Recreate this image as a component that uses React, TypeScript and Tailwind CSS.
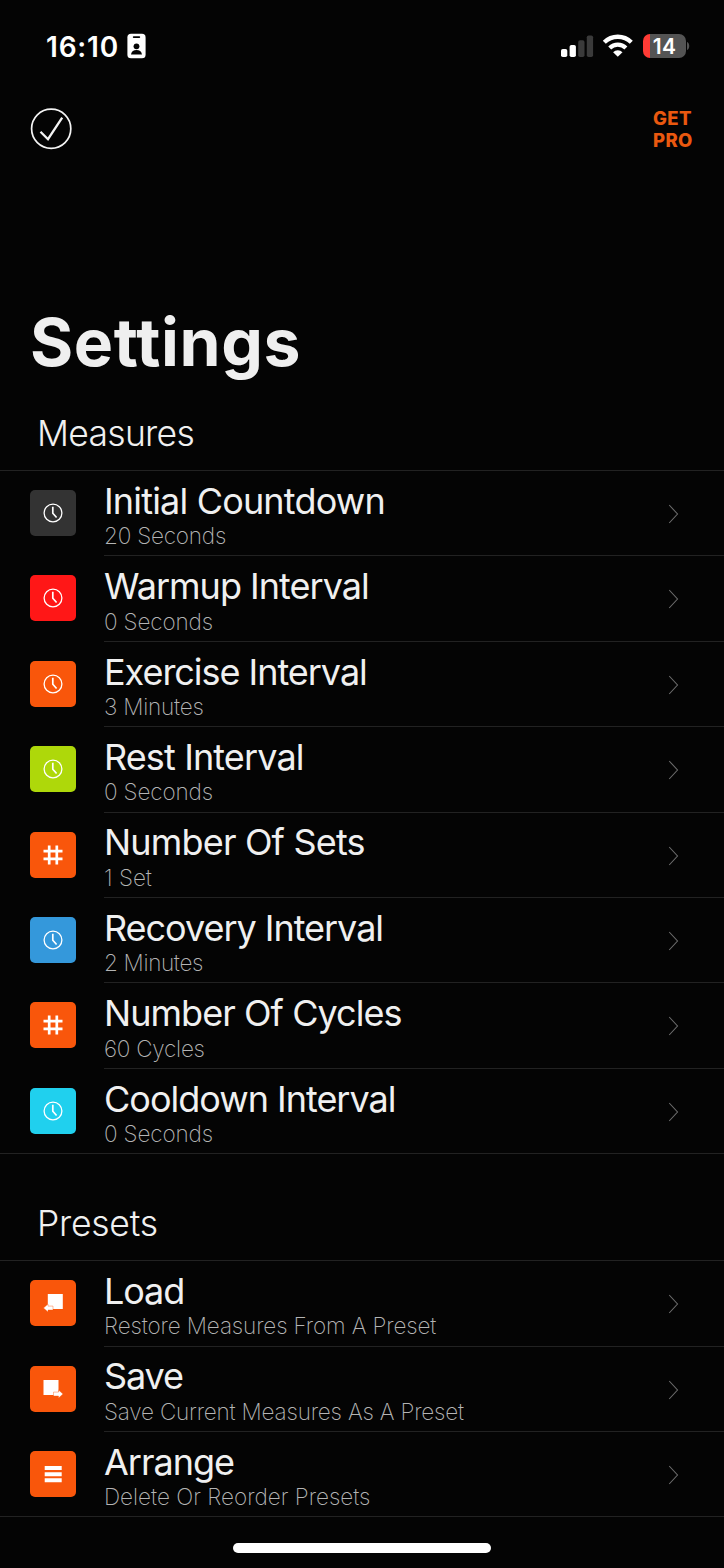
import React from "react";

type IconKind = "clock" | "hash" | "load" | "save" | "arrange";

interface Item {
  title: string;
  detail: string;
  icon: IconKind;
  color: string;
  titleTracking: string;
  detailTracking: string;
}

const measures: Item[] = [
  { title: "Initial Countdown", detail: "20 Seconds", icon: "clock", color: "bg-[#333333]", titleTracking: "tracking-[-0.82px]", detailTracking: "tracking-[-0.2px]" },
  { title: "Warmup Interval", detail: "0 Seconds", icon: "clock", color: "bg-[#ff1717]", titleTracking: "tracking-[-0.98px]", detailTracking: "tracking-[-0.15px]" },
  { title: "Exercise Interval", detail: "3 Minutes", icon: "clock", color: "bg-[#f9560b]", titleTracking: "tracking-[-1.03px]", detailTracking: "tracking-[-0.22px]" },
  { title: "Rest Interval", detail: "0 Seconds", icon: "clock", color: "bg-[#aed80a]", titleTracking: "tracking-[-0.88px]", detailTracking: "tracking-[-0.15px]" },
  { title: "Number Of Sets", detail: "1 Set", icon: "hash", color: "bg-[#f9560b]", titleTracking: "tracking-[-0.82px]", detailTracking: "tracking-[0px]" },
  { title: "Recovery Interval", detail: "2 Minutes", icon: "clock", color: "bg-[#3498db]", titleTracking: "tracking-[-1.03px]", detailTracking: "tracking-[-0.33px]" },
  { title: "Number Of Cycles", detail: "60 Cycles", icon: "hash", color: "bg-[#f9560b]", titleTracking: "tracking-[-0.95px]", detailTracking: "tracking-[-0.25px]" },
  { title: "Cooldown Interval", detail: "0 Seconds", icon: "clock", color: "bg-[#20d0ee]", titleTracking: "tracking-[-1px]", detailTracking: "tracking-[-0.15px]" },
];

const presets: Item[] = [
  { title: "Load", detail: "Restore Measures From A Preset", icon: "load", color: "bg-[#f9560b]", titleTracking: "tracking-[-1.1px]", detailTracking: "tracking-[-0.13px]" },
  { title: "Save", detail: "Save Current Measures As A Preset", icon: "save", color: "bg-[#f9560b]", titleTracking: "tracking-[-1.1px]", detailTracking: "tracking-[-0.19px]" },
  { title: "Arrange", detail: "Delete Or Reorder Presets", icon: "arrange", color: "bg-[#f9560b]", titleTracking: "tracking-[-1px]", detailTracking: "tracking-[0px]" },
];

function RowIcon({ kind }: { kind: IconKind }) {
  return (
    <svg width="46" height="46" viewBox="0 0 46 46" fill="none">
      {kind === "clock" && (
        <g stroke="#fff">
          <circle cx="23" cy="23" r="8.9" strokeWidth="1.3" />
          <path d="M22.8 16.8v6.4l3.8 4.3" strokeWidth="1.7" />
        </g>
      )}
      {kind === "hash" && (
        <path d="M19.2 13.5v19M26.8 13.5v19M13.5 19.2h19M13.5 26.8h19" stroke="#fff" strokeWidth="2.7" />
      )}
      {kind === "load" && (
        <g fill="#fff">
          <path d="M17.8 14h15v15h-15z" />
          <path d="M13.5 28l4.5-4v2.1h5v3.9h-5v2z" stroke="#f9560b" strokeWidth=".4" />
        </g>
      )}
      {kind === "save" && (
        <g fill="#fff">
          <path d="M13.5 14h15v15h-15z" />
          <path d="M33 28l-4.5-4v2.1h-5v3.9h5v2z" stroke="#f9560b" strokeWidth=".4" />
        </g>
      )}
      {kind === "arrange" && <path d="M14.7 15h17v4h-17zM14.7 21.2h17v4h-17zM14.7 27.3h17v4h-17z" fill="#fff" />}
    </svg>
  );
}

function Row({ item, last }: { item: Item; last: boolean }) {
  return (
    <li className={last ? "flex h-[85.4px] border-b border-[#222222] pl-[30px]" : "flex h-[85.4px] pl-[30px]"}>
      <div className={`mt-[19px] size-[46px] shrink-0 overflow-hidden rounded-[5px] ${item.color}`}>
        <RowIcon kind={item.icon} />
      </div>
      <div className={last ? "ml-7 flex flex-1 justify-between" : "ml-7 flex flex-1 justify-between border-b border-[#222222]"}>
        <div className="pt-[11.8px] whitespace-nowrap">
          <div className={`text-[36px] leading-9 text-[#f0f0f0] ${item.titleTracking}`}>{item.title}</div>
          <div className={`mt-[5.5px] text-[22.5px] leading-6 font-extralight text-[#b4b4b4] ${item.detailTracking}`}>{item.detail}</div>
        </div>
        <svg className="mt-[33px] mr-[44px]" width="12" height="20" viewBox="0 0 12 20" fill="none">
          <path d="M1.2 1l8.3 9-8.3 9" stroke="#6c6c6c" strokeWidth="1.1" />
        </svg>
      </div>
    </li>
  );
}

function List({ items }: { items: Item[] }) {
  return (
    <ul className="border-t border-[#222222]">
      {items.map((item, i) => (
        <Row key={item.title} item={item} last={i === items.length - 1} />
      ))}
    </ul>
  );
}

export default function App() {
  return (
    <div className="flex h-[1568px] w-[724px] flex-col overflow-hidden bg-[#040404] font-['Inter',sans-serif] text-white">
      <header className="flex h-[92px] items-center justify-between pr-[34px] pl-[46px]">
        <div className="flex items-center gap-[8px]">
          <span className="pt-[2px] text-[28px] leading-8 font-semibold tracking-[0.8px]">16:10</span>
          <svg width="19" height="26" viewBox="0 0 19 26">
            <rect x=".4" y=".8" width="18.2" height="24.5" rx="3.6" fill="#fff" />
            <g fill="#040404">
              <rect x="5.8" y="3.2" width="7.4" height="1.8" rx=".9" />
              <circle cx="9.5" cy="13.3" r="2.9" />
              <path d="M4 21.5c.4-3 2.6-4.4 5.5-4.4s5.1 1.4 5.5 4.4z" />
            </g>
          </svg>
        </div>
        <div className="flex items-center">
          <svg width="33" height="24" viewBox="0 0 33 24">
            <g fill="#fff">
              <rect x="0" y="15" width="6.3" height="8" rx="1.8" />
              <rect x="8.6" y="11" width="6.3" height="12" rx="1.8" />
            </g>
            <g fill="#3a3a3a">
              <rect x="17.2" y="6.3" width="6.3" height="16.7" rx="1.8" />
              <rect x="25.8" y="1.5" width="6.3" height="21.5" rx="1.8" />
            </g>
          </svg>
          <svg className="ml-[8px]" width="32" height="24" viewBox="0 0 32 24" fill="none">
            <path d="M2.3 8.3a19.2 19.2 0 0 1 27 0" stroke="#fff" strokeWidth="4.3" />
            <path d="M7.7 13.9a11.6 11.6 0 0 1 16.2 0" stroke="#fff" strokeWidth="4.2" />
            <path d="M15.8 22.7l-4.7-4.5a6.7 6.7 0 0 1 9.4 0z" fill="#fff" />
          </svg>
          <div className="ml-[9px] flex h-6 w-[43px] items-center justify-center rounded-[7px] bg-[linear-gradient(90deg,#ff3b35_7px,#545454_7px)]">
            <span className="pt-px text-[21px] leading-6 font-semibold tracking-[0.3px]">14</span>
          </div>
          <svg className="ml-px" width="3" height="8" viewBox="0 0 3 8">
            <path d="M0 0c3 1 3 7 0 8z" fill="#545454" />
          </svg>
        </div>
      </header>

      <nav className="flex h-[74px] items-center justify-between pr-[31px] pl-[30px]">
        <svg width="42" height="42" viewBox="0 0 42 42" fill="none" stroke="#f4f4f4">
          <circle cx="21.2" cy="20.7" r="19.6" strokeWidth="1.7" />
          <path d="M10.5 23.7l7.5 7.5 14.2-21.5" strokeWidth="2.3" />
        </svg>
        <div className="w-10 text-[18.5px] leading-[22px] font-extrabold tracking-[0.4px] text-[#ea580f]">
          GET
          <br />
          PRO
        </div>
      </nav>

      <h1 className="mt-[136px] pl-[30px] text-[66px] leading-[80px] font-bold tracking-[0.6px] text-[#efefef]">Settings</h1>

      <h2 className="mt-[30px] h-[58px] pl-[37px] text-[35.5px] leading-[44px] font-light tracking-[-0.7px] text-[#f0f0f0]">Measures</h2>
      <List items={measures} />

      <h2 className="mt-[48px] h-[58px] pl-[37px] text-[35.5px] leading-[44px] font-light tracking-[-0.25px] text-[#f0f0f0]">Presets</h2>
      <List items={presets} />

      <div className="mt-[26px] ml-[233px] h-[10px] w-[258px] shrink-0 rounded-full bg-white" />
    </div>
  );
}
